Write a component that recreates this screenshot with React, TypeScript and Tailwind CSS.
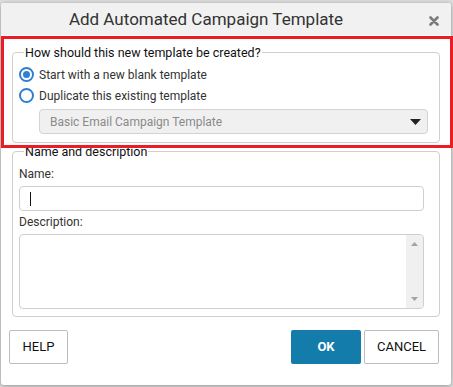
import React from 'react';

const font = { fontFamily: 'Roboto, "Liberation Sans", sans-serif' };

const Radio: React.FC<{ checked?: boolean; label: string }> = ({ checked, label }) => (
  <label className="flex items-center h-[21px]">
    <span className="w-[15px] h-[15px] rounded-full border-2 border-[#2f7fd3] flex items-center justify-center bg-white">
      {checked && <span className="w-[7px] h-[7px] rounded-full bg-[#2f7fd3]" />}
    </span>
    <span className="ml-[5px] text-[12px] text-[#333]">{label}</span>
  </label>
);

export default function App() {
  return (
    <div className="relative w-[453px] h-[387px] bg-[#dedede] overflow-hidden" style={font}>
      {/* dialog */}
      <div className="absolute left-[1px] top-[3px] w-[450px] h-[382px] bg-white rounded-[3px] shadow-[0_1px_5px_rgba(0,0,0,0.35)] flex flex-col">
        {/* header */}
        <div className="h-[32px] bg-[#f1f1f1] rounded-t-[3px] flex items-center shrink-0">
          <div className="flex-1 text-center pl-[2px] pr-[20px] text-[17px] text-[#333] leading-none">
            Add Automated Campaign Template
          </div>
          <svg width="10" height="10" viewBox="0 0 10 10" className="mr-[12px] mt-[3px]">
            <path d="M1.5 1.5 L8.5 8.5 M8.5 1.5 L1.5 8.5" stroke="#7a7a7a" strokeWidth="2.6" strokeLinecap="round" />
          </svg>
        </div>

        <div className="px-[11px] pt-[10px]">
          {/* creation method */}
          <fieldset className="border border-[#cfcfcf] rounded-[4px] pl-[6px] pr-[11px] pb-[8px]">
            <legend className="ml-[5px] px-[1px] text-[12.5px] text-[#111] leading-[15px]">
              How should this new template be created?
            </legend>
            <div className="pt-[4px]">
              <Radio checked label="Start with a new blank template" />
              <Radio label="Duplicate this existing template" />
            </div>
            <div className="ml-[20px] mt-[3px] h-[25px] bg-[#f0f0f0] border border-[#d3d3d3] rounded-[4px] flex items-center pl-[10px] pr-[6px]">
              <span className="flex-1 text-[12px] text-[#8a8a8a]">Basic Email Campaign Template</span>
              <svg width="11" height="6" viewBox="0 0 11 6">
                <path d="M0 0 H11 L5.5 6 Z" fill="#222" />
              </svg>
            </div>
          </fieldset>

          {/* name and description */}
          <fieldset className="mt-[1px] border border-[#cfcfcf] rounded-[4px] pl-[6px] pr-[15px] pb-[7px]">
            <legend className="ml-[5px] px-[1px] text-[12.5px] text-[#111] leading-[15px]">
              Name and description
            </legend>
            <div className="text-[12px] text-[#333] leading-[15px] mt-[8px]">Name:</div>
            <div className="mt-[4px] h-[25px] border border-[#cfcfcf] rounded-[4px] flex items-center pl-[10px]">
              <span className="w-[1px] h-[14px] bg-[#111]" />
            </div>
            <div className="text-[12px] text-[#333] leading-[15px] mt-[4px]">Description:</div>
            <div className="mt-[4px] h-[75px] border border-[#cfcfcf] rounded-[4px] flex overflow-hidden">
              <div className="flex-1" />
              <div className="w-[17px] bg-[#f0f0f0] flex flex-col items-center justify-between py-[7px]">
                <svg width="7" height="4" viewBox="0 0 7 4">
                  <path d="M0 4 L3.5 0 L7 4 Z" fill="#a3a3a3" />
                </svg>
                <svg width="7" height="4" viewBox="0 0 7 4">
                  <path d="M0 0 H7 L3.5 4 Z" fill="#a3a3a3" />
                </svg>
              </div>
            </div>
          </fieldset>
        </div>

        {/* buttons */}
        <div className="flex items-center pl-[8px] pr-[12px] mt-[13px]">
          <button className="w-[59px] h-[34px] border border-[#bdbdbd] rounded-[2px] text-[13px] text-[#111] bg-white">
            HELP
          </button>
          <div className="flex-1" />
          <button className="w-[70px] h-[34px] rounded-[2px] text-[13px] font-bold text-white bg-[#137cab]">
            OK
          </button>
          <button className="ml-[3px] w-[75px] h-[34px] border border-[#bdbdbd] rounded-[2px] text-[13px] text-[#111] bg-white">
            CANCEL
          </button>
        </div>
      </div>

      {/* red highlight annotation */}
      <div className="absolute left-[1px] top-[36px] w-[452px] h-[112px] border-[3px] border-[#ec1c24] pointer-events-none" />
    </div>
  );
}
